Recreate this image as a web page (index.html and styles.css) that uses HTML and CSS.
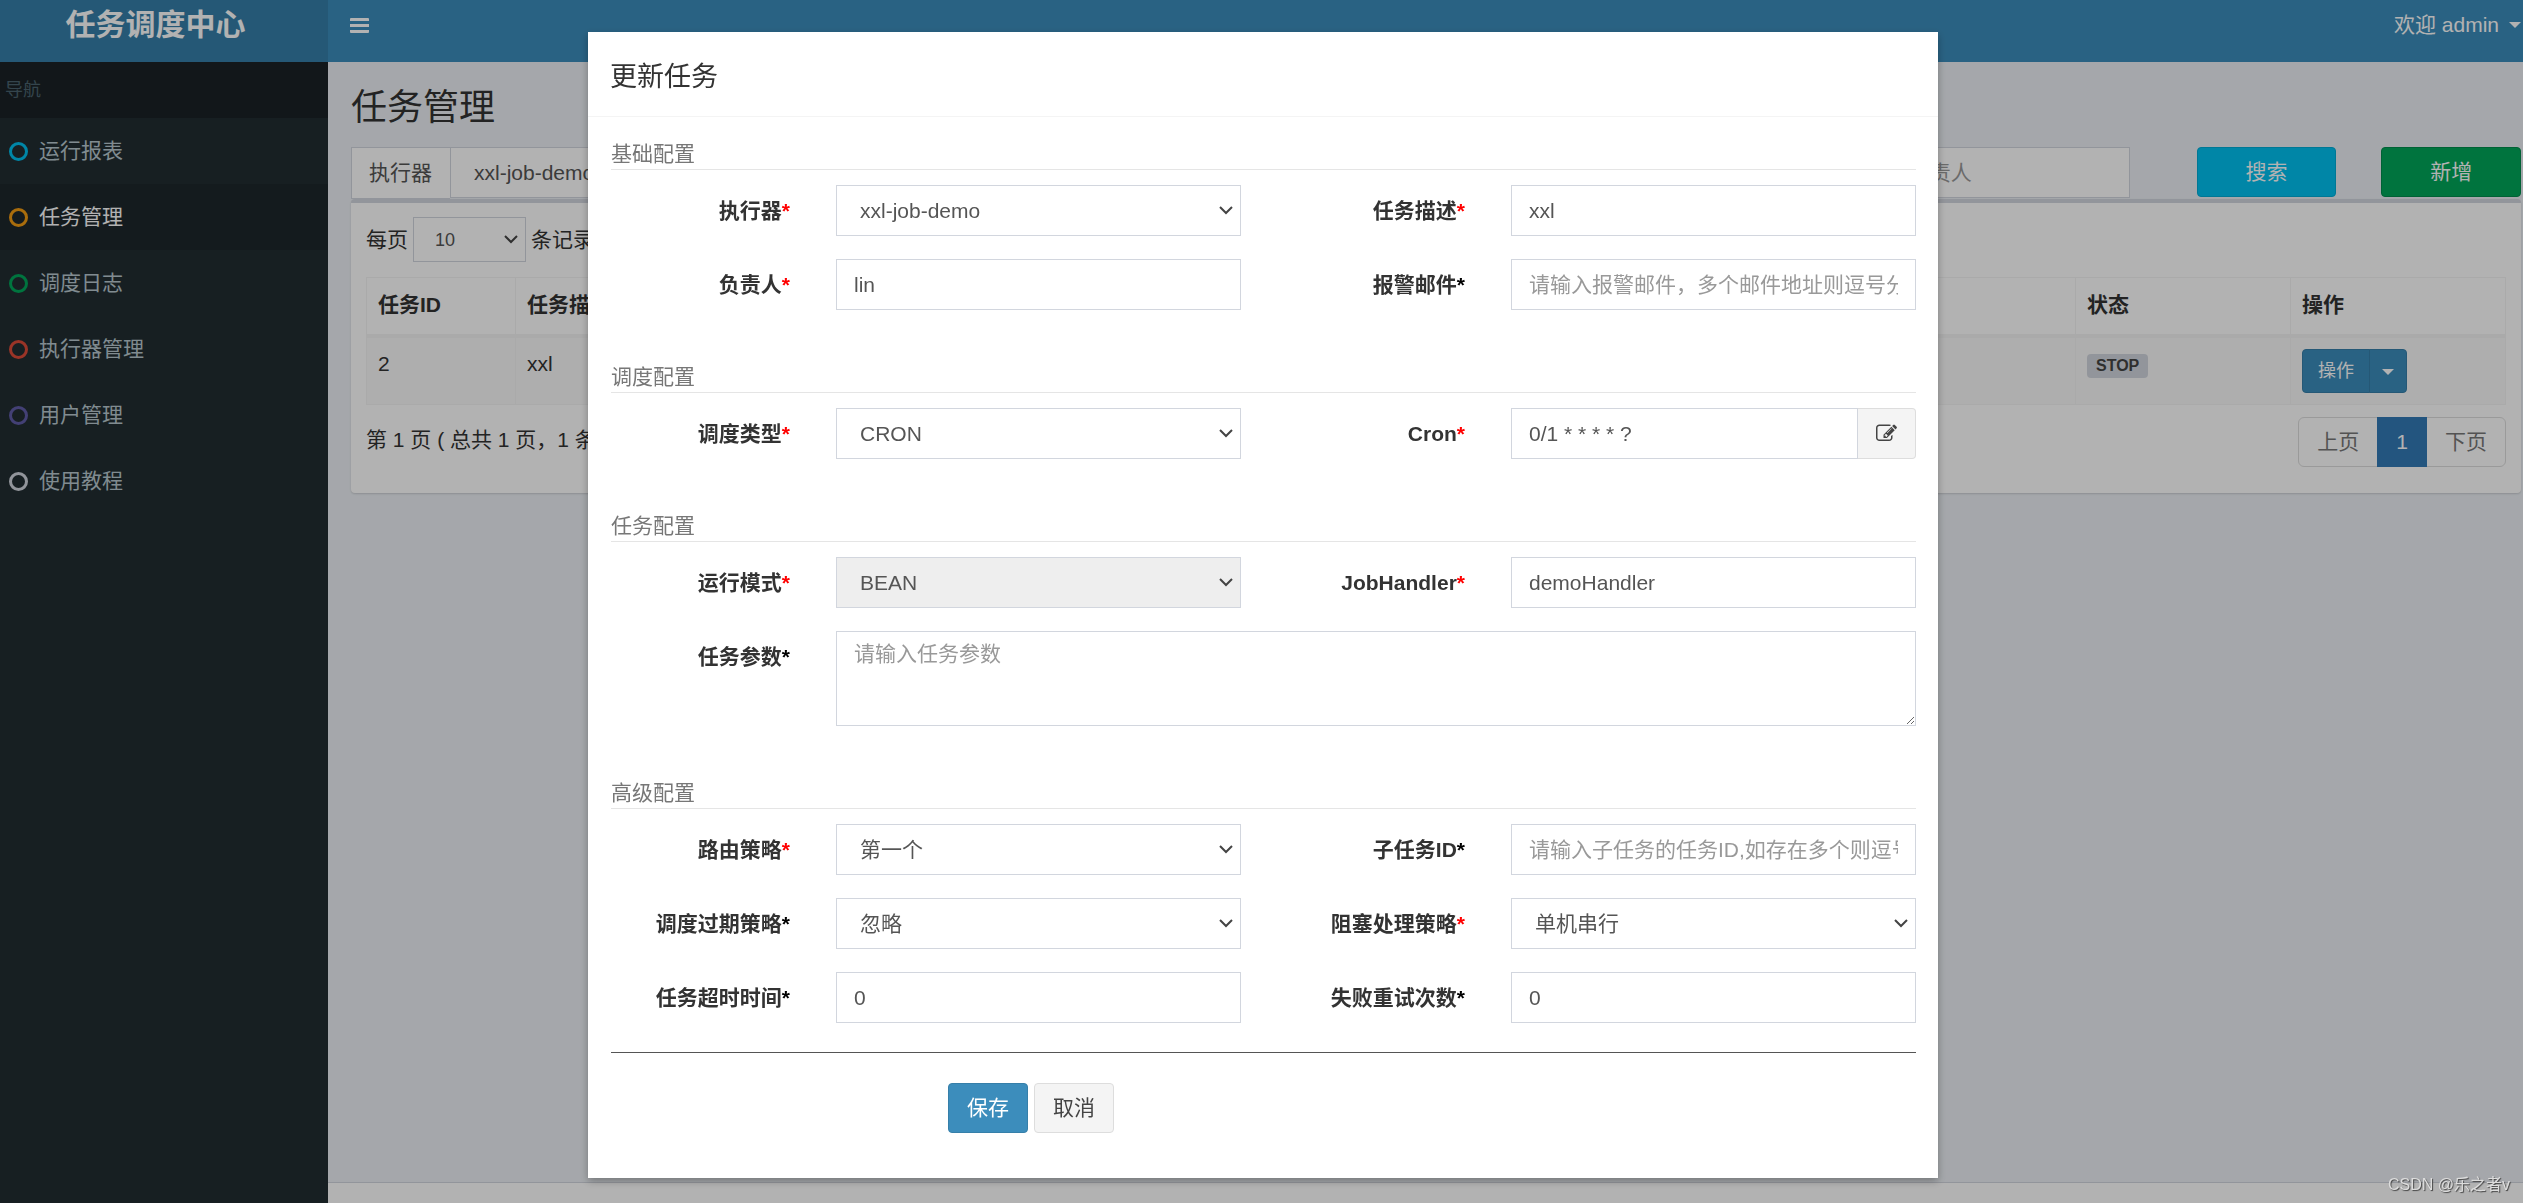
FILE: index.html
```html
<!DOCTYPE html>
<html lang="zh-CN">
<head>
<meta charset="utf-8">
<meta name="viewport" content="width=device-width, initial-scale=1">
<title>任务调度中心</title>
<link rel="stylesheet" href="styles.css">
</head>
<body>
<div class="app">
  <header class="topbar">
    <a class="logo" href="#">任务调度中心</a>
    <nav class="navbar">
      <button class="menu-toggle" type="button" aria-label="切换导航">
        <svg viewBox="0 0 19 15" width="19" height="15" aria-hidden="true"><path d="M1 0h17q1 0 1 1v2H0V1q0-1 1-1zM0 6h19v3H0zM0 12h19v2q0 1-1 1H1q-1 0-1-1z" fill="currentColor"/></svg>
      </button>
      <a class="user" href="#">欢迎 admin <span class="caret"></span></a>
    </nav>
  </header>

  <aside class="sidebar">
    <div class="side-title">导航</div>
    <ul class="side-menu">
      <li><a href="#"><i class="ring ring-aqua"></i>运行报表</a></li>
      <li><a class="active" href="#"><i class="ring ring-yellow"></i>任务管理</a></li>
      <li><a href="#"><i class="ring ring-green"></i>调度日志</a></li>
      <li><a href="#"><i class="ring ring-red"></i>执行器管理</a></li>
      <li><a href="#"><i class="ring ring-purple"></i>用户管理</a></li>
      <li><a href="#"><i class="ring ring-gray"></i>使用教程</a></li>
    </ul>
  </aside>

  <main class="main">
    <div class="content">
      <h1>任务管理</h1>
      <div class="filters">
        <div class="group span-3">
          <label class="addon" for="f-group">执行器</label>
          <select class="control" id="f-group"><option>xxl-job-demo</option></select>
        </div>
        <select class="control" aria-label="状态"><option>全部</option></select>
        <input class="control span-2" type="text" placeholder="请输入任务描述" aria-label="任务描述">
        <input class="control span-2" type="text" placeholder="请输入JobHandler" aria-label="JobHandler">
        <div class="span-2 author"><input class="control" type="text" placeholder="请输入负责人" aria-label="负责人"></div>
        <button class="btn btn-info" type="button">搜索</button>
        <button class="btn btn-success" type="button">新增</button>
      </div>

      <section class="box">
        <div class="length">
          <label for="page-size">每页</label>
          <select class="control control-sm" id="page-size"><option>10</option></select>
          <span>条记录</span>
        </div>
        <table class="table">
          <colgroup><col class="col-id"><col><col><col><col><col class="col-tail"><col class="col-tail"></colgroup>
          <thead>
            <tr><th>任务ID</th><th>任务描述</th><th>调度类型</th><th>运行模式</th><th>负责人</th><th>状态</th><th>操作</th></tr>
          </thead>
          <tbody>
            <tr>
              <td>2</td><td>xxl</td><td>CRON</td><td>BEAN</td><td>lin</td>
              <td><span class="tag">STOP</span></td>
              <td>
                <div class="split">
                  <button class="btn btn-primary btn-sm" type="button">操作</button>
                  <button class="btn btn-primary btn-sm btn-caret" type="button" aria-label="更多操作"><span class="caret"></span></button>
                </div>
              </td>
            </tr>
          </tbody>
        </table>
        <div class="table-foot">
          <span>第 1 页 ( 总共 1 页，1 条记录 )</span>
          <nav class="pager"><a href="#">上页</a><a class="current" href="#">1</a><a href="#">下页</a></nav>
        </div>
      </section>
    </div>
    <footer class="footer"></footer>
  </main>
</div>

<div class="backdrop">
  <div class="modal" role="dialog" aria-modal="true" aria-labelledby="modal-title">
    <h2 class="modal-title" id="modal-title">更新任务</h2>
    <form class="form">
      <section class="part">
        <h3>基础配置</h3>
        <div class="fields">
          <label for="executor">执行器<span class="req">*</span></label>
          <select class="control" id="executor"><option>xxl-job-demo</option></select>
          <label for="desc">任务描述<span class="req">*</span></label>
          <input class="control" id="desc" type="text" value="xxl">
          <label for="author">负责人<span class="req">*</span></label>
          <input class="control" id="author" type="text" value="lin">
          <label for="email">报警邮件<span class="opt">*</span></label>
          <input class="control" id="email" type="text" placeholder="请输入报警邮件，多个邮件地址则逗号分隔">
        </div>
      </section>
      <section class="part">
        <h3>调度配置</h3>
        <div class="fields">
          <label for="type">调度类型<span class="req">*</span></label>
          <select class="control" id="type"><option>CRON</option></select>
          <label for="cron">Cron<span class="req">*</span></label>
          <div class="group">
            <input class="control" id="cron" type="text" value="0/1 * * * * ?">
            <button class="btn btn-default btn-edit" type="button" aria-label="编辑 Cron">
              <svg viewBox="0 0 1792 1792" width="21" height="21" aria-hidden="true"><path fill="currentColor" d="M888 1184l116-116-152-152-116 116v56h96v96h56zm440-720q-16-16-33 1l-350 350q-17 17-1 33t33-1l350-350q17-17 1-33zm80 594v190q0 119-84.5 203.5t-203.5 84.5h-832q-119 0-203.5-84.5t-84.5-203.5v-832q0-119 84.5-203.5t203.5-84.5h832q63 0 117 25 15 7 18 23 3 17-9 29l-49 49q-14 14-32 8-23-6-45-6h-832q-66 0-113 47t-47 113v832q0 66 47 113t113 47h832q66 0 113-47t47-113v-126q0-13 9-22l64-64q15-15 35-7t20 29zm-96-738l288 288-672 672h-288v-288zm444 132l-92 92-288-288 92-92q28-28 68-28t68 28l152 152q28 28 28 68t-28 68z"/></svg>
            </button>
          </div>
        </div>
      </section>
      <section class="part">
        <h3>任务配置</h3>
        <div class="fields">
          <label for="mode">运行模式<span class="req">*</span></label>
          <select class="control" id="mode" disabled><option>BEAN</option></select>
          <label for="handler">JobHandler<span class="req">*</span></label>
          <input class="control" id="handler" type="text" value="demoHandler">
          <label for="param">任务参数<span class="opt">*</span></label>
          <textarea class="control" id="param" placeholder="请输入任务参数"></textarea>
        </div>
      </section>
      <section class="part">
        <h3>高级配置</h3>
        <div class="fields">
          <label for="route">路由策略<span class="req">*</span></label>
          <select class="control" id="route"><option>第一个</option></select>
          <label for="child">子任务ID<span class="opt">*</span></label>
          <input class="control" id="child" type="text" placeholder="请输入子任务的任务ID,如存在多个则逗号分隔">
          <label for="misfire">调度过期策略<span class="opt">*</span></label>
          <select class="control" id="misfire"><option>忽略</option></select>
          <label for="block">阻塞处理策略<span class="req">*</span></label>
          <select class="control" id="block"><option>单机串行</option></select>
          <label for="timeout">任务超时时间<span class="opt">*</span></label>
          <input class="control" id="timeout" type="text" value="0">
          <label for="retry">失败重试次数<span class="opt">*</span></label>
          <input class="control" id="retry" type="text" value="0">
        </div>
      </section>
      <hr>
      <div class="actions">
        <button class="btn btn-primary" type="submit">保存</button>
        <button class="btn btn-default" type="button">取消</button>
      </div>
    </form>
  </div>
</div>
<div class="watermark">CSDN @乐之者v</div>
</body>
</html>
```
FILE: styles.css
```css
* { box-sizing: border-box; }

body {
  margin: 0;
  font: 21px/30px "Liberation Sans", "Noto Sans CJK SC", sans-serif;
  color: #333;
  background: #ecf0f5;
  overflow: hidden;
}

a { color: inherit; text-decoration: none; }
h1, h2, h3, ul { margin: 0; padding: 0; font-weight: 400; }
button, input, select, textarea { font: inherit; }

/* Frame */
.app {
  display: grid;
  grid-template: 62px 1fr / 328px minmax(0, 1fr);
  min-height: 100vh;
}
.topbar {
  grid-column: 1 / -1;
  display: grid;
  grid-template-columns: 328px 1fr;
  color: #fff;
}
.logo {
  padding: 0 17px 12px 0;
  background: #367fa9;
  font-size: 30px;
  font-weight: 700;
  line-height: 50px;
  text-align: center;
}
.navbar {
  display: flex;
  align-items: center;
  justify-content: space-between;
  padding: 0 2px 12px 22px;
  background: #3c8dbc;
}
.menu-toggle {
  display: flex;
  padding: 0;
  border: 0;
  background: none;
  color: inherit;
}
.user { display: flex; align-items: center; gap: 10px; }
.caret {
  display: inline-block;
  border: 6px solid transparent;
  border-top-color: currentColor;
  border-bottom: 0;
}

/* Sidebar */
.sidebar { background: #222d32; color: #b8c7ce; }
.side-title {
  padding: 13px 5px;
  background: #1a2226;
  color: #4b646f;
  font-size: 18px;
}
.side-menu { list-style: none; }
.side-menu a { display: flex; align-items: center; gap: 11px; padding: 18px 9px; }
.side-menu .active { background: #1e282c; color: #fff; }
.ring { width: 19px; height: 19px; border: 3px solid; border-radius: 50%; }
.ring-aqua { color: #00c0ef; }
.ring-yellow { color: #f39c12; }
.ring-green { color: #00a65a; }
.ring-red { color: #dd4b39; }
.ring-purple { color: #605ca8; }
.ring-gray { color: #d2d6de; }

/* Content */
.main { display: flex; flex-direction: column; }
.content { flex: 1; padding: 24px 2px 0 23px; }
h1 { margin-bottom: 17px; font-size: 36px; line-height: 44px; }
.filters {
  display: grid;
  grid-template-columns: repeat(12, minmax(0, 1fr));
  column-gap: 45px;
}
.span-2 { grid-column: span 2; }
.span-3 { grid-column: span 3; }
.author { padding-right: 22px; }
.footer { height: 21px; border-top: 1px solid #d2d6de; background: #fff; }

/* Controls */
.control {
  width: 100%;
  height: 51px;
  padding: 0 17px;
  border: 1px solid #d2d6de;
  border-radius: 0;
  background: #fff;
  color: #555;
}
.control::placeholder { color: #999; opacity: 1; }
select.control {
  padding: 0 23px;
  appearance: none;
  background: #fff url("data:image/svg+xml,%3Csvg xmlns='http://www.w3.org/2000/svg' width='14' height='9'%3E%3Cpath d='M1 1l6 6 6-6' fill='none' stroke='%23444' stroke-width='2'/%3E%3C/svg%3E") no-repeat right 7px center;
}
select.control:disabled { background-color: #eee; opacity: 1; }
textarea.control { display: block; height: 95px; padding: 7px 17px; resize: vertical; }
select.control-sm { height: 45px; padding: 0 21px; font-size: 18px; }
.group { display: flex; }
.group .control { flex: 1; min-width: 0; }
.addon {
  padding: 10px 18px 10px 17px;
  border: 1px solid #d2d6de;
  border-right: 0;
  background: #fff;
  color: #555;
}

.btn {
  height: 50px;
  padding: 0 18px;
  border: 1px solid;
  border-radius: 4px;
}
.btn-info { border-color: #00acd6; background: #00c0ef; color: #fff; }
.btn-success { border-color: #008d4c; background: #00a65a; color: #fff; }
.btn-primary { border-color: #367fa9; background: #3c8dbc; color: #fff; }
.btn-default { border-color: #ddd; background: #f4f4f4; color: #444; }
.btn-sm { height: 44px; padding: 0 15px; font-size: 18px; }
.btn-edit {
  display: flex;
  align-items: center;
  height: 51px;
  border-left: 0;
  border-radius: 0 4px 4px 0;
}

/* Job list */
.box {
  padding: 14px 15px 26px;
  border-top: 4px solid #d2d6de;
  border-radius: 4px;
  background: #fff;
  box-shadow: 0 1px 2px rgba(0, 0, 0, .15);
}
.length { display: flex; align-items: center; gap: 5px; margin-bottom: 15px; }
.length .control { width: 113px; }
.table { width: 100%; table-layout: fixed; border-collapse: collapse; }
.col-id { width: 149px; }
.col-tail { width: 215px; }
.table th, .table td {
  padding: 11px;
  border: 1px solid #f4f4f4;
  text-align: left;
  vertical-align: top;
}
.table th { padding-top: 12px; padding-bottom: 14px; border-bottom-width: 4px; }
.table td { height: 68px; background: #f9f9f9; }
.tag {
  display: inline-block;
  padding: 0 9px;
  border-radius: 4px;
  background: #d2d6de;
  color: #444;
  font-size: 16px;
  font-weight: 700;
  line-height: 24px;
}
.split { display: flex; }
.split .btn:first-child { border-radius: 4px 0 0 4px; }
.split .btn-caret { padding: 0 12px; margin-left: -1px; border-radius: 0 4px 4px 0; }
.btn-caret .caret { vertical-align: middle; }
.table-foot { display: flex; justify-content: space-between; margin-top: 12px; }
.table-foot span { padding-top: 8px; }
.pager { display: flex; border: 1px solid #ddd; border-radius: 6px; color: #777; }
.pager a { padding: 9px 18px; }
.pager .current { margin: -1px 0; padding: 10px 19px; background: #337ab7; color: #fff; }

/* Dialog */
.backdrop {
  position: fixed;
  inset: 0;
  padding: 32px 0 0 3px;
  background: rgba(0, 0, 0, .3);
}
.modal {
  width: 1350px;
  max-width: 100%;
  margin: 0 auto;
  background: #fff;
  box-shadow: 0 3px 8px rgba(0, 0, 0, .3);
}
.modal-title {
  padding: 26px 22px 20px;
  border-bottom: 1px solid #f4f4f4;
  font-size: 27px;
  line-height: 38px;
}
.form { padding: 22px 22px 45px 23px; }
.part + .part { margin-top: 52px; }
.part h3 {
  margin-bottom: 15px;
  border-bottom: 1px solid #e5e5e5;
  color: #777;
  font-size: 21px;
}
.fields {
  display: grid;
  grid-template-columns: 4fr 9fr 4fr 9fr;
  gap: 23px 45px;
}
.fields label { padding: 11px 1px 0 0; font-weight: 700; text-align: right; }
.fields textarea { grid-column: 2 / -1; }
.req { color: #f00; }
.opt { color: #000; }
hr { margin: 29px 0 30px; border: 0; border-top: 1px solid #555; }
.actions { display: flex; gap: 6px; padding-left: 337px; }

.watermark {
  position: fixed;
  right: 13px;
  bottom: 3px;
  color: #ddd;
  font-size: 16px;
  text-shadow: 1px 1px 1px #444;
}
```
